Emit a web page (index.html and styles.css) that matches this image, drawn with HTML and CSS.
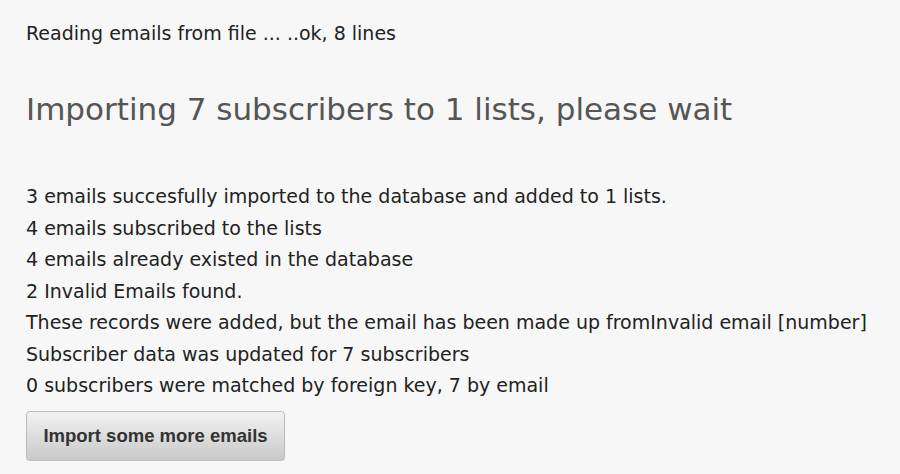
FILE: index.html
```html
<!DOCTYPE html>
<html>
<head>
<meta charset="utf-8">
<link rel="stylesheet" href="styles.css">
</head>
<body>
<div class="page">
  <p class="status">Reading emails from file ... ..ok, 8 lines</p>
  <h1 class="title">Importing 7 subscribers to 1 lists, please wait</h1>
  <div class="results">
    <div class="line">3 emails succesfully imported to the database and added to 1 lists.</div>
    <div class="line">4 emails subscribed to the lists</div>
    <div class="line">4 emails already existed in the database</div>
    <div class="line">2 Invalid Emails found.</div>
    <div class="line">These records were added, but the email has been made up fromInvalid email [number]</div>
    <div class="line">Subscriber data was updated for 7 subscribers</div>
    <div class="line">0 subscribers were matched by foreign key, 7 by email</div>
  </div>
  <button class="btn" type="button">Import some more emails</button>
</div>
</body>
</html>
```
FILE: styles.css
```css
html, body {
  margin: 0;
  padding: 0;
  background: #f7f7f7;
}
.page {
  padding: 20px 26px 0;
  font-family: "DejaVu Sans", sans-serif;
  color: #222;
  font-size: 19px;
}
.status {
  margin: 0;
  line-height: 26px;
}
.title {
  margin: 45px 0 0;
  font-size: 31px;
  font-weight: normal;
  color: #555;
  line-height: 36px;
}
.results {
  margin-top: 54px;
  display: flex;
  flex-direction: column;
}
.line {
  line-height: 31.5px;
}
.btn {
  margin-top: 9px;
  width: 259px;
  height: 50px;
  border: 1px solid #bdbdbd;
  border-radius: 4px;
  background: linear-gradient(#f2f2f2, #c9c9c9);
  box-shadow: 0 1px 1px rgba(0,0,0,0.15);
  font-family: "Liberation Sans", Arial, sans-serif;
  font-weight: bold;
  font-size: 18.5px;
  color: #333;
  padding: 0;
}
```
